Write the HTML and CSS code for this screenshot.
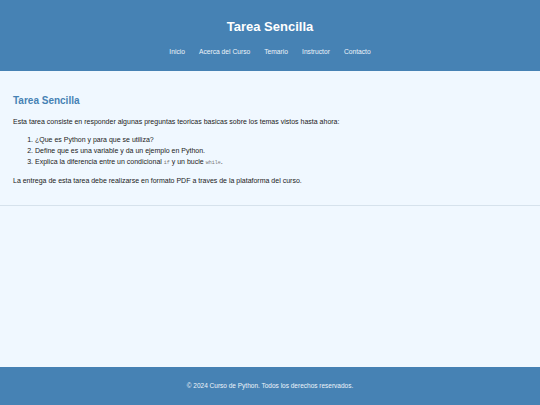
FILE: index.html
```html
<!DOCTYPE html>
<html lang="es">
<head>
<meta charset="utf-8">
<title>Tarea Sencilla</title>
<link rel="stylesheet" href="styles.css">
</head>
<body>
<div class="page">
  <header class="site-header">
    <h1 class="site-title">Tarea Sencilla</h1>
    <nav class="site-nav">
      <a href="#">Inicio</a>
      <a href="#">Acerca del Curso</a>
      <a href="#">Temario</a>
      <a href="#">Instructor</a>
      <a href="#">Contacto</a>
    </nav>
  </header>
  <main class="content">
    <section class="task">
      <h2 class="task-title">Tarea Sencilla</h2>
      <p>Esta tarea consiste en responder algunas preguntas teoricas basicas sobre los temas vistos hasta ahora:</p>
      <ol class="questions">
        <li>¿Que es Python y para que se utiliza?</li>
        <li>Define que es una variable y da un ejemplo en Python.</li>
        <li>Explica la diferencia entre un condicional <code>if</code> y un bucle <code>while</code>.</li>
      </ol>
      <p>La entrega de esta tarea debe realizarse en formato PDF a traves de la plataforma del curso.</p>
    </section>
  </main>
  <footer class="site-footer">
    <p>© 2024 Curso de Python. Todos los derechos reservados.</p>
  </footer>
</div>
</body>
</html>
```
FILE: styles.css
```css
html, body {
  margin: 0;
  padding: 0;
  height: 100%;
}
body {
  font-family: "Liberation Sans", Arial, sans-serif;
  background: #f0f8ff;
  color: #222;
}
.page {
  display: flex;
  flex-direction: column;
  min-height: 100%;
}
.site-header {
  background: #4682b4;
  color: #fff;
  text-align: center;
  height: 71px;
  box-sizing: border-box;
  padding-top: 19px;
}
.site-title {
  margin: 0;
  font-size: 13px;
  line-height: 16px;
  font-weight: bold;
}
.site-nav {
  margin-top: 13px;
  display: flex;
  justify-content: center;
  gap: 14px;
}
.site-nav a {
  color: #eef4fa;
  text-decoration: none;
  font-size: 6.7px;
  line-height: 8px;
}
.content {
  flex: 1;
}
.task {
  padding: 24px 13px 20px;
  border-bottom: 1px solid #d6e2ec;
}
.task-title {
  margin: 0 0 11px;
  color: #4682b4;
  font-size: 10px;
  line-height: 12px;
}
.task p {
  margin: 0;
  font-size: 7px;
  line-height: 8px;
}
.questions {
  margin: 8px 0 8px;
  padding-left: 22px;
  font-size: 7px;
  line-height: 11px;
}
code {
  font-family: "Liberation Mono", monospace;
  font-size: 5px;
  color: #777;
}
.site-footer {
  background: #4682b4;
  color: #eef4fa;
  text-align: center;
  height: 38px;
  display: flex;
  align-items: center;
  justify-content: center;
}
.site-footer p {
  margin: 0;
  font-size: 6.5px;
  line-height: 8px;
}
```
